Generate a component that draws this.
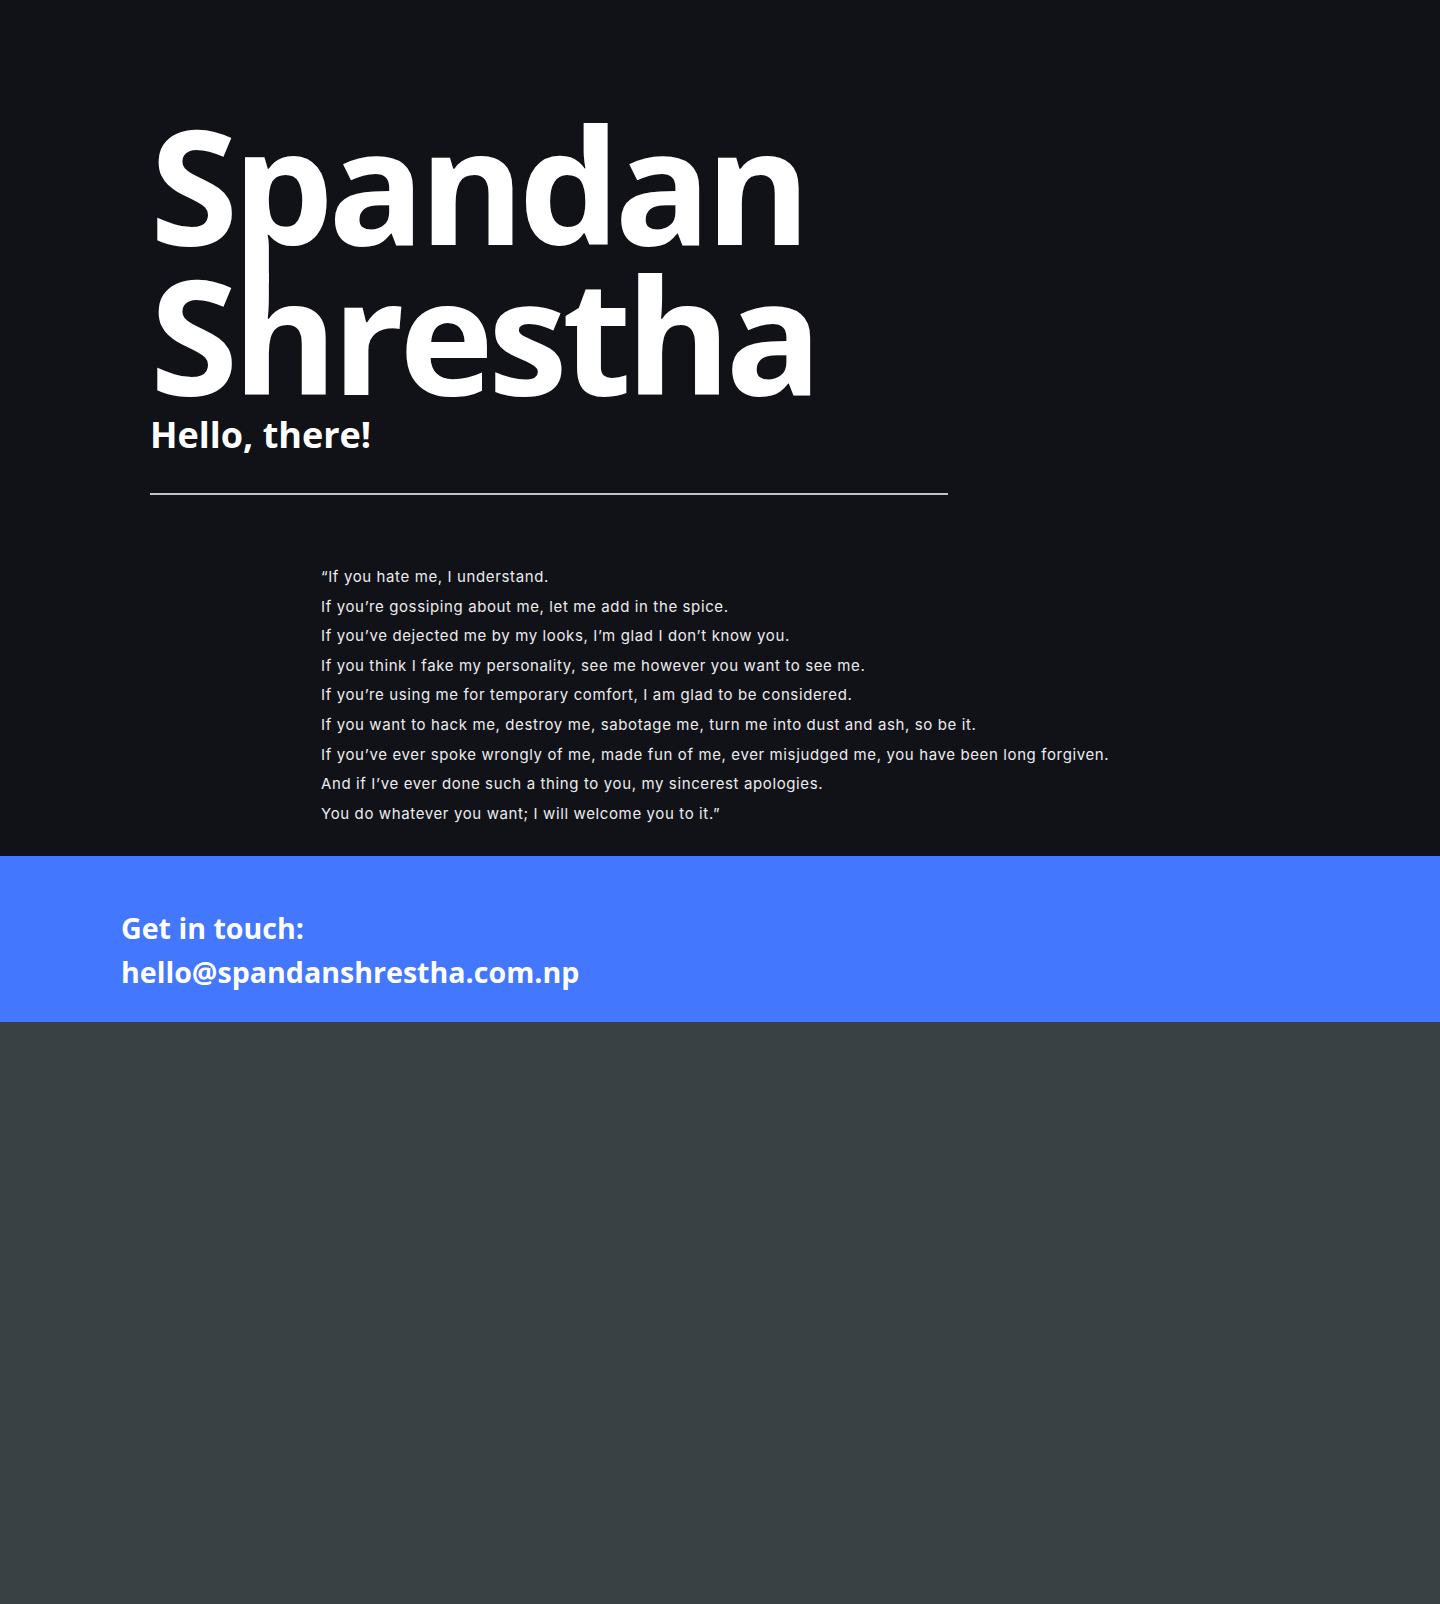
const lines = [
  "“If you hate me, I understand.",
  "If you’re gossiping about me, let me add in the spice.",
  "If you’ve dejected me by my looks, I’m glad I don’t know you.",
  "If you think I fake my personality, see me however you want to see me.",
  "If you’re using me for temporary comfort, I am glad to be considered.",
  "If you want to hack me, destroy me, sabotage me, turn me into dust and ash, so be it.",
  "If you’ve ever spoke wrongly of me, made fun of me, ever misjudged me, you have been long forgiven.",
  "And if I’ve ever done such a thing to you, my sincerest apologies.",
  "You do whatever you want; I will welcome you to it.”",
];

export default function App() {
  return (
    <div className="min-h-[1604px] bg-[#394144] font-['Open_Sans',sans-serif]">
      <section className="bg-[#111217] pt-[108px] pb-[28px]">
        <div className="pl-[150px]">
          <h1 className="text-[160px] leading-[150px] font-bold text-white tracking-[-5.6px]">
            Spandan
            <br />
            Shrestha
          </h1>
          <h2 className="mt-[5px] text-[36px] leading-[43px] font-bold text-white">
            Hello, there!
          </h2>
          <div className="mt-[37px] w-[798px] h-[2px] bg-[#c4c4c4]"></div>
        </div>
        <div className="pl-[321px] mt-[67px] font-['Inter',sans-serif] text-[15px] leading-[29.6px] text-[#ececee] tracking-[0.62px]">
          {lines.map((l) => (
            <p key={l}>{l}</p>
          ))}
        </div>
      </section>
      <section className="bg-[#4377fd] h-[166px] pl-[121px] pt-[50px]">
        <p className="text-[28.6px] leading-[44px] font-bold text-white">Get in touch:</p>
        <p className="text-[28.6px] leading-[44px] font-bold text-white">
          hello@spandanshrestha.com.np
        </p>
      </section>
    </div>
  );
}
